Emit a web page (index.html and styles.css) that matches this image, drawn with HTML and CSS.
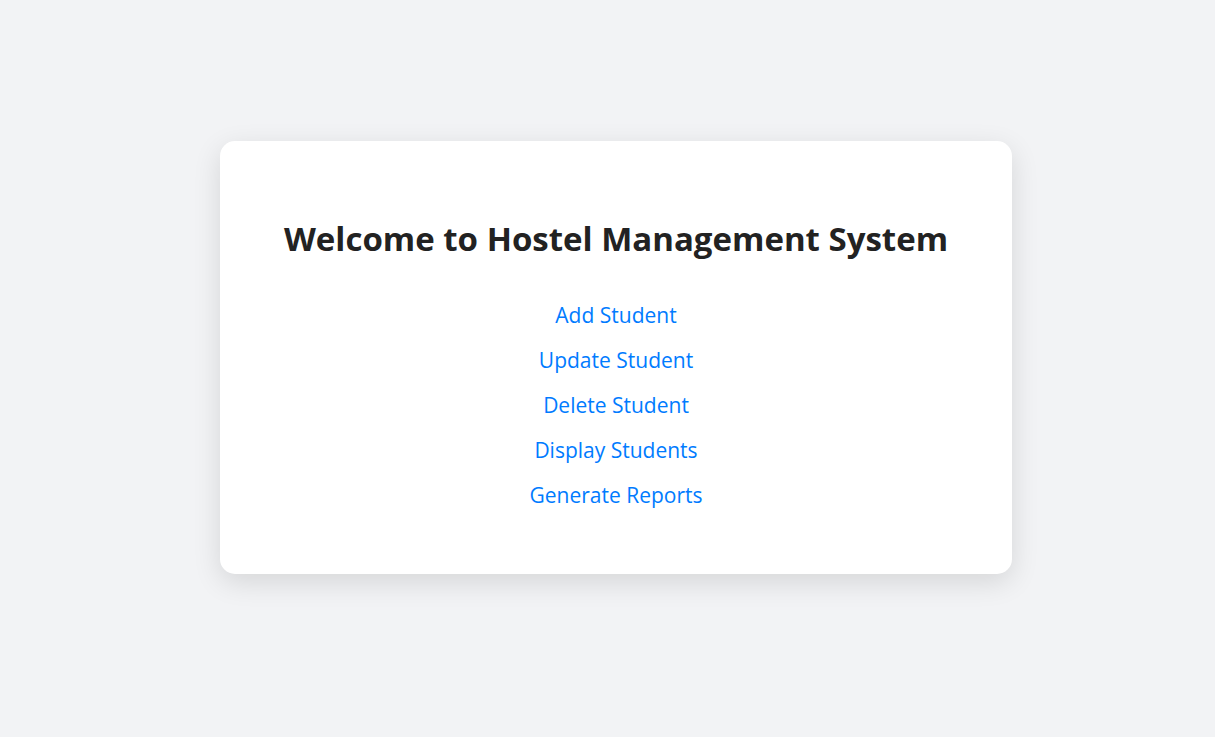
FILE: index.html
```html
<!DOCTYPE html>
<html lang="en">
<head>
<meta charset="utf-8">
<title>Hostel Management System</title>
<link rel="stylesheet" href="styles.css">
</head>
<body>
<main class="page">
  <section class="card">
    <h1 class="title">Welcome to Hostel Management System</h1>
    <nav class="menu">
      <a class="menu-link" href="#">Add Student</a>
      <a class="menu-link" href="#">Update Student</a>
      <a class="menu-link" href="#">Delete Student</a>
      <a class="menu-link" href="#">Display Students</a>
      <a class="menu-link" href="#">Generate Reports</a>
    </nav>
  </section>
</main>
</body>
</html>
```
FILE: styles.css
```css
html, body {
  margin: 0;
  padding: 0;
}
body {
  background: #f2f3f5;
  font-family: "Open Sans", "Noto Sans", sans-serif;
}
.page {
  box-sizing: border-box;
  height: 737px;
  display: flex;
  justify-content: center;
  align-items: center;
  padding: 0 0 22px 17px;
}
.card {
  box-sizing: border-box;
  width: 792px;
  height: 433px;
  background: #ffffff;
  border-radius: 15px;
  box-shadow: 0 8px 28px rgba(0, 0, 0, 0.12);
  padding: 76px 40px 0;
  text-align: center;
}
.title {
  margin: 0 0 40px;
  font-size: 33px;
  line-height: 44px;
  font-weight: 700;
  color: #222222;
}
.menu {
  display: flex;
  flex-direction: column;
  align-items: center;
  gap: 17px;
}
.menu-link {
  font-size: 21px;
  line-height: 28px;
  color: #007bff;
  text-decoration: none;
}
```
